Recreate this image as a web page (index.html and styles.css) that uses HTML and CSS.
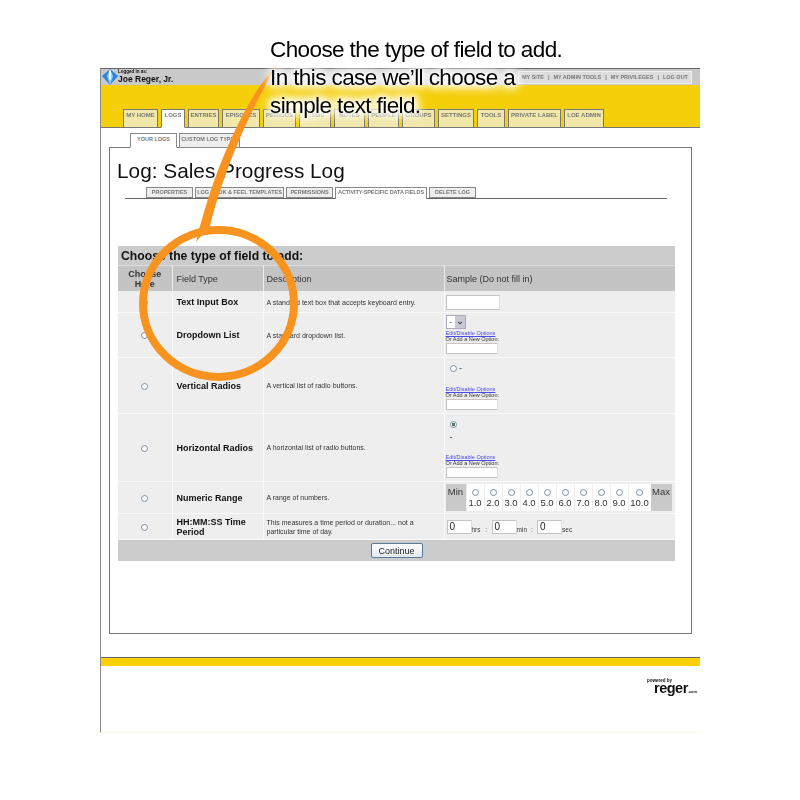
FILE: index.html
```html
<!DOCTYPE html>
<html lang="en">
<head>
    <meta charset="UTF-8">
    <title>Log: Sales Progress Log</title>
    <link rel="stylesheet" href="styles.css">
</head>
<body>
    <div class="app">
        <div class="topbar">
            <svg class="logo" width="16" height="16" viewBox="0 0 16 16">
                <polygon points="8,0 16,7 8,16 0,7" fill="#2b86e0"/>
                <polygon points="8,0 11,7 8,16 5,7" fill="#9accf7"/>
                <rect x="7" y="1.5" width="2" height="9" fill="#fff"/>
            </svg>
            <div class="user">
                <div class="user-label">Logged in as:</div>
                <div class="user-name">Joe Reger, Jr.</div>
            </div>
            <div class="topnav">
                <span>MY SITE</span><i>|</i><span>MY ADMIN TOOLS</span><i>|</i><span>MY PRIVILEGES</span><i>|</i><span>LOG OUT</span>
            </div>
        </div>

        <div class="yellowbar">
            <a class="tab">MY HOME</a>
            <a class="tab tab-on">LOGS</a>
            <a class="tab">ENTRIES</a>
            <a class="tab">EPISODES</a>
            <a class="tab">PERIODS</a>
            <a class="tab">ITEMS</a>
            <a class="tab">NOTES</a>
            <a class="tab">PEOPLE</a>
            <a class="tab">GROUPS</a>
            <a class="tab">SETTINGS</a>
            <a class="tab">TOOLS</a>
            <a class="tab">PRIVATE LABEL</a>
            <a class="tab">LOE ADMIN</a>
        </div>

        <div class="subtabs">
            <a class="subtab subtab-on">YOUR LOGS</a>
            <a class="subtab">CUSTOM LOG TYPES</a>
        </div>

        <div class="box">
            <h1>Log: Sales Progress Log</h1>
            <div class="logtabs">
                <a class="logtab">PROPERTIES</a>
                <a class="logtab">LOG LOOK &amp; FEEL TEMPLATES</a>
                <a class="logtab">PERMISSIONS</a>
                <a class="logtab logtab-on">ACTIVITY-SPECIFIC DATA FIELDS</a>
                <a class="logtab">DELETE LOG</a>
            </div>

            <div class="fields">
                <h2>Choose the type of field to add:</h2>
                <table>
                    <tr class="head">
                        <th class="col-pick">Choose<br>Here</th>
                        <th class="col-type">Field Type</th>
                        <th class="col-desc">Description</th>
                        <th class="col-sample">Sample (Do not fill in)</th>
                    </tr>
                    <tr class="row-1">
                        <td class="pick"><span class="radio"></span></td>
                        <td class="name">Text Input Box</td>
                        <td class="desc">A standard text box that accepts keyboard entry.</td>
                        <td class="sample"><span class="input w54"></span></td>
                    </tr>
                    <tr class="row-2">
                        <td class="pick"><span class="radio"></span></td>
                        <td class="name">Dropdown List</td>
                        <td class="desc">A standard dropdown list.</td>
                        <td class="sample sample-top">
                            <div class="select"><span>-</span><b></b></div>
                            <a class="edit">Edit/Disable Options</a>
                            <div class="add">Or Add a New Option:</div>
                            <span class="input w52"></span>
                        </td>
                    </tr>
                    <tr class="row-3">
                        <td class="pick"><span class="radio"></span></td>
                        <td class="name">Vertical Radios</td>
                        <td class="desc">A vertical list of radio buttons.</td>
                        <td class="sample sample-top">
                            <div class="sample-radio"><span class="radio"></span> -</div>
                            <a class="edit">Edit/Disable Options</a>
                            <div class="add">Or Add a New Option:</div>
                            <span class="input w52"></span>
                        </td>
                    </tr>
                    <tr class="row-4">
                        <td class="pick"><span class="radio"></span></td>
                        <td class="name">Horizontal Radios</td>
                        <td class="desc">A horizontal list of radio buttons.</td>
                        <td class="sample sample-top">
                            <div class="sample-radio sample-radio-h"><span class="radio radio-on"></span><div>-</div></div>
                            <a class="edit">Edit/Disable Options</a>
                            <div class="add">Or Add a New Option:</div>
                            <span class="input w52"></span>
                        </td>
                    </tr>
                    <tr class="row-5">
                        <td class="pick"><span class="radio"></span></td>
                        <td class="name">Numeric Range</td>
                        <td class="desc">A range of numbers.</td>
                        <td class="sample">
                            <div class="range">
                                <div class="range-end">Min</div>
                                <div class="range-opt"><span class="radio"></span>1.0</div>
                                <div class="range-opt"><span class="radio"></span>2.0</div>
                                <div class="range-opt"><span class="radio"></span>3.0</div>
                                <div class="range-opt"><span class="radio"></span>4.0</div>
                                <div class="range-opt"><span class="radio"></span>5.0</div>
                                <div class="range-opt"><span class="radio"></span>6.0</div>
                                <div class="range-opt"><span class="radio"></span>7.0</div>
                                <div class="range-opt"><span class="radio"></span>8.0</div>
                                <div class="range-opt"><span class="radio"></span>9.0</div>
                                <div class="range-opt range-wide"><span class="radio"></span>10.0</div>
                                <div class="range-end range-max">Max</div>
                            </div>
                        </td>
                    </tr>
                    <tr class="row-6">
                        <td class="pick"><span class="radio"></span></td>
                        <td class="name">HH:MM:SS Time Period</td>
                        <td class="desc">This measures a time period or duration... not a particular time of day.</td>
                        <td class="sample">
                            <div class="time">
                                <span class="input w25">0</span><small>hrs</small><em>:</em>
                                <span class="input w25">0</span><small>min</small><em>:</em>
                                <span class="input w25">0</span><small>sec</small>
                            </div>
                        </td>
                    </tr>
                </table>
                <div class="actions"><button>Continue</button></div>
            </div>
        </div>

        <div class="footer">
            <div class="reger">
                <div class="reger-by">powered by</div>
                <div class="reger-name">reger<span>.com</span></div>
            </div>
        </div>
    </div>

    <svg class="pointer" width="800" height="400" viewBox="0 0 800 400">
        <ellipse cx="218.5" cy="303.5" rx="75.5" ry="73.5" fill="none" stroke="#f7931e" stroke-width="8"/>
        <path d="M277 65 C250 92 216 160 196 242 L210 226 C224 170 250 110 277 65 Z" fill="#f7931e"/>
    </svg>
    <div class="callout">
        <div>Choose the type of field to add.</div>
        <div class="glow">In this case we’ll choose a</div>
        <div class="glow">simple text field.</div>
    </div>
</body>
</html>
```

FILE: styles.css
```css
body {
    margin: 0;
    background: #fff;
    font-family: "Liberation Sans", Arial, sans-serif;
    color: #111;
}
a {
    text-decoration: none;
}

.app {
    width: 600px;
    height: 665px;
    margin: 68px 0 0 100px;
    border-left: 1px solid #888;
    border-bottom: 1px solid #fbf8ea;
    box-sizing: border-box;
    filter: blur(0.3px);
}

.topbar {
    display: flex;
    align-items: center;
    height: 17px;
    background: #c9c9c9;
    border-top: 1px solid #666;
    box-sizing: border-box;
}
.logo {
    margin-left: 1px;
}
.user {
    margin-top: -1px;
    flex: 1;
}
.user-label {
    font-size: 4.5px;
    line-height: 5px;
    font-weight: bold;
}
.user-name {
    font-size: 8.5px;
    line-height: 10px;
    font-weight: bold;
}
.topnav {
    display: flex;
    align-items: center;
    justify-content: space-between;
    width: 174px;
    height: 13px;
    margin-right: 8px;
    padding: 0 3px;
    box-sizing: border-box;
    background: #ddd;
    border: 1px solid #f0f0f0;
    font-size: 5.5px;
    font-weight: bold;
    color: #777;
}
.topnav i {
    font-style: normal;
}

.yellowbar {
    display: flex;
    align-items: flex-end;
    gap: 3px;
    height: 43px;
    padding-left: 22px;
    background: #f5cf0a;
    border-bottom: 1px solid #777;
    box-sizing: border-box;
}
.tab {
    height: 19px;
    margin-bottom: -1px;
    box-sizing: border-box;
    padding-top: 2px;
    background: #f1e8aa;
    border: 1px solid #777;
    font-size: 6px;
    font-weight: bold;
    color: #777;
    text-align: center;
    white-space: nowrap;
}
.tab:nth-child(1) { width: 35px; }
.tab:nth-child(2) { width: 24px; }
.tab:nth-child(3) { width: 31px; }
.tab:nth-child(4) { width: 38px; }
.tab:nth-child(5) { width: 33px; }
.tab:nth-child(6) { width: 32px; }
.tab:nth-child(7) { width: 31px; }
.tab:nth-child(8) { width: 31px; }
.tab:nth-child(9) { width: 33px; }
.tab:nth-child(10) { width: 36px; }
.tab:nth-child(11) { width: 28px; }
.tab:nth-child(12) { width: 53px; }
.tab:nth-child(13) { width: 40px; }
.tab-on {
    background: #fff;
    border-bottom-color: #fff;
}

.subtabs {
    display: flex;
    gap: 2px;
    height: 19px;
    padding: 5px 0 0 29px;
    box-sizing: border-box;
}
.subtab {
    width: 61px;
    height: 15px;
    padding-top: 2px;
    box-sizing: border-box;
    background: #eee;
    border: 1px solid #888;
    font-size: 5.5px;
    font-weight: bold;
    color: #777;
    text-align: center;
    white-space: nowrap;
}
.subtab-on {
    width: 47px;
    background: #fff;
    border-bottom-color: #fff;
    position: relative;
    z-index: 1;
}

.box {
    width: 583px;
    height: 487px;
    margin-left: 8px;
    padding: 11px 8px 0;
    box-sizing: border-box;
    border: 1px solid #777;
}
h1 {
    margin: 0 0 0 -1px;
    font-size: 20.8px;
    line-height: 24px;
    font-weight: normal;
}

.logtabs {
    display: flex;
    gap: 2px;
    width: 542px;
    height: 12px;
    margin: 4px 0 0 7px;
    padding-left: 21px;
    box-sizing: border-box;
    border-bottom: 1px solid #666;
}
.logtab {
    height: 11px;
    padding-top: 1px;
    box-sizing: border-box;
    background: #eee;
    border: 1px solid #888;
    font-size: 5.5px;
    font-weight: bold;
    color: #777;
    text-align: center;
    white-space: nowrap;
}
.logtab:nth-child(1) { width: 47px; }
.logtab:nth-child(2) { width: 89px; }
.logtab:nth-child(3) { width: 47px; }
.logtab:nth-child(4) { width: 92px; letter-spacing: -0.1px; }
.logtab:nth-child(5) { width: 47px; }
.logtab-on {
    height: 12px;
    background: #fff;
    border-bottom: 0;
}

.fields {
    width: 557px;
    margin-top: 47px;
}
h2 {
    margin: 0;
    height: 19px;
    padding-left: 3px;
    background: #cbcbcb;
    font-size: 12.2px;
    line-height: 20px;
    font-weight: bold;
}
table {
    width: 557px;
    table-layout: fixed;
    border-collapse: collapse;
}
th {
    height: 26px;
    padding: 0 0 0 3px;
    box-sizing: border-box;
    background: #c4c4c4;
    border: 1px solid #eee;
    border-top: 1px solid #ddd;
    font-size: 9px;
    line-height: 10px;
    font-weight: normal;
    text-align: left;
    color: #333;
}
td {
    padding: 0 0 0 3px;
    box-sizing: border-box;
    background: #eee;
    border: 1px solid #fafafa;
    font-size: 7px;
    line-height: 9px;
    color: #333;
}
tr > :first-child {
    border-left: 0;
}
tr > :last-child {
    border-right: 0;
}
.col-pick {
    width: 54px;
    padding: 0;
    font-weight: bold;
    text-align: center;
}
.col-type {
    width: 91px;
    padding-left: 4px;
}
.col-desc {
    width: 181px;
}
.col-sample {
    padding-left: 2px;
}
.row-1 td { height: 21px; }
.row-2 td { height: 45px; }
.row-3 td { height: 56px; }
.row-4 td { height: 68px; }
.row-5 td { height: 32px; }
.row-6 td { height: 26px; }

.pick {
    padding: 0;
    text-align: center;
}
.name {
    padding-left: 4px;
    font-size: 9px;
    line-height: 10px;
    font-weight: bold;
    color: #111;
}
.sample {
    padding-left: 1px;
}
.sample-top {
    vertical-align: top;
}
.radio {
    display: inline-block;
    width: 7px;
    height: 7px;
    box-sizing: border-box;
    vertical-align: middle;
    background: #fff;
    border: 1px solid #7a8ea5;
    border-radius: 50%;
}
.radio-on {
    background: radial-gradient(circle, #557a55 0 1.5px, #fff 2px);
}
.input {
    display: block;
    height: 11px;
    box-sizing: border-box;
    background: #fff;
    border: 1px solid #c4c4c4;
    border-right-color: #ddd;
    font-size: 10px;
    line-height: 12px;
    padding-left: 2px;
    color: #222;
}
.w54 { width: 54px; height: 15px; }
.w52 { width: 52px; }
.w25 { width: 25px; height: 14px; }

.select {
    display: flex;
    width: 20px;
    height: 14px;
    margin-top: 2px;
    box-sizing: border-box;
    border: 1px solid #aab;
    background: #fff;
    font-size: 8px;
    line-height: 12px;
}
.select span {
    width: 8px;
    text-align: center;
}
.select b {
    position: relative;
    flex: 1;
    background: #c9c9d4;
}
.select b::after {
    content: "";
    position: absolute;
    left: 3px;
    top: 4px;
    width: 3px;
    height: 3px;
    border-right: 1px solid #223;
    border-bottom: 1px solid #223;
    transform: rotate(45deg) scale(0.8);
}
.edit {
    display: block;
    margin-top: 1px;
    font-size: 5.5px;
    line-height: 6px;
    color: #4a4aee;
    text-decoration: underline;
}
.add {
    font-size: 5.5px;
    line-height: 7px;
    color: #333;
}
.sample-radio {
    height: 27px;
    padding: 5px 0 0 4px;
    box-sizing: border-box;
    font-size: 9px;
    line-height: 10px;
}
.sample-radio-h {
    height: 39px;
}
.sample-radio-h div {
    margin-top: 3px;
}

.range {
    display: flex;
    gap: 1px;
    width: 226px;
    height: 27px;
    font-size: 9.5px;
    line-height: 10px;
    color: #333;
}
.range-end {
    width: 20px;
    padding-top: 3px;
    box-sizing: border-box;
    text-align: center;
    background: #c9c9c9;
}
.range-max {
    width: 21px;
    margin-left: -1px;
}
.range-opt {
    display: flex;
    flex-direction: column;
    align-items: center;
    gap: 2px;
    width: 17px;
    padding-top: 5px;
    box-sizing: border-box;
    background: #fff;
}
.range-wide {
    width: 22px;
}

.time {
    display: flex;
    align-items: flex-end;
    padding: 1px 0 0 1px;
    font-size: 6.5px;
    line-height: 6px;
    color: #444;
}
.time small {
    font-size: 6.5px;
    margin-bottom: 1px;
}
.time em {
    width: 11px;
    margin-bottom: 1px;
    font-style: normal;
    text-align: center;
}
.time em:nth-of-type(2) {
    width: 10px;
}

.actions {
    display: flex;
    justify-content: center;
    align-items: center;
    height: 21px;
    background: #cbcbcb;
}
button {
    width: 52px;
    height: 15px;
    padding: 0;
    background: linear-gradient(#fff, #e4e8f0);
    border: 1px solid #5a7a9a;
    border-radius: 2px;
    font-family: inherit;
    font-size: 9px;
    color: #222;
}

.footer {
    height: 8px;
    margin-top: 23px;
    background: #fdd106;
    border-top: 1px solid #666;
    position: relative;
}
.reger {
    position: absolute;
    top: 20px;
    right: 4px;
    width: 50px;
}
.reger-by {
    font-size: 4.5px;
    line-height: 5px;
    font-weight: bold;
    padding-left: 1px;
}
.reger-name {
    font-size: 14.5px;
    line-height: 11px;
    font-weight: bold;
    letter-spacing: -0.5px;
    padding-left: 8px;
    white-space: nowrap;
}
.reger-name span {
    font-size: 4px;
    letter-spacing: 0;
}

.pointer {
    position: absolute;
    left: 0;
    top: 0;
    pointer-events: none;
}
.callout {
    position: absolute;
    left: 270px;
    top: 36px;
    font-size: 22.5px;
    line-height: 28px;
    letter-spacing: -0.6px;
    color: #000;
    white-space: nowrap;
}
.glow {
    text-shadow: 0 0 6px #fff, 0 0 6px #fff, 0 0 10px #fff, 0 0 10px #fff, 0 0 14px #fff, 0 0 14px #fff, 0 0 14px #fff;
}
```
